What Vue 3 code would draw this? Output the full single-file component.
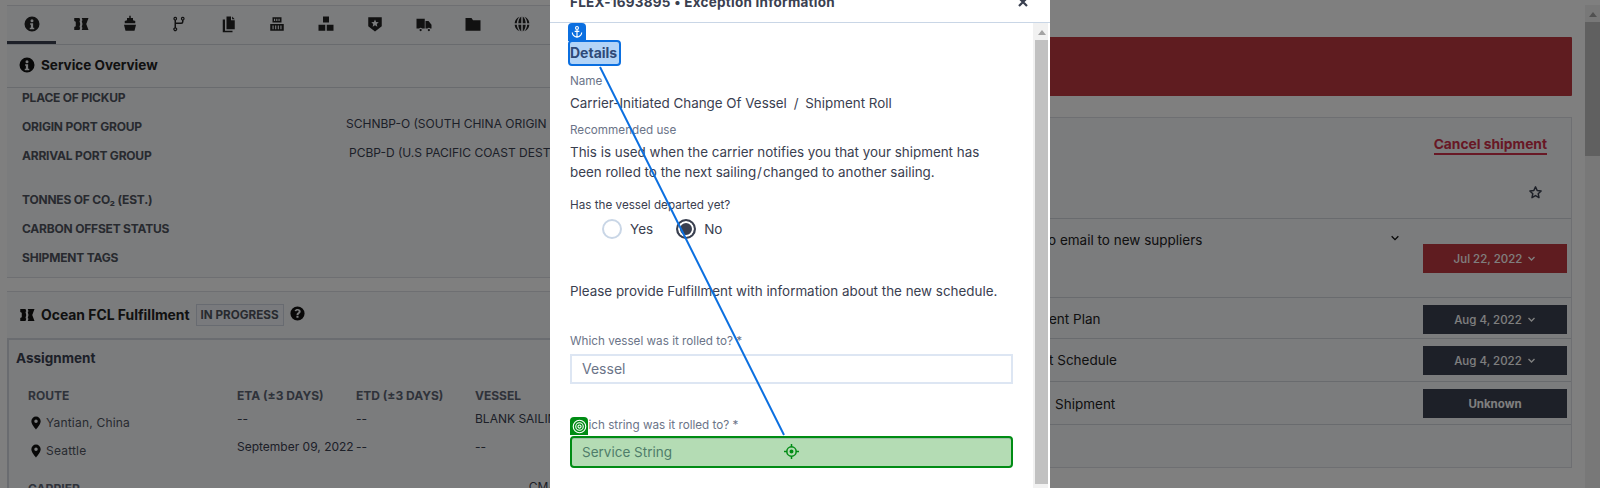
<script setup>
const tabs = [
  'M12 2a10 10 0 1 0 0 20 10 10 0 0 0 0-20zm0 3.600a2 2 0 1 1 0 4 2 2 0 0 1 0-4zM9.500 11h4v6H15v2H9v-2h1.500v-4h-1z',
  'M3 4h7l1 3-1 1 1 4-1 4 1 1-1 3H3v-4l2-1v-6L3 8zM13 4h9l-3 8 3 8h-9l1-3-1-1 1-4-1-4 1-1z',
  'M11 1h2v3h3v3l3 1v3H5V8l3-1V4h3zM4 13h16l-2 8H6z',
  'M7 2.500a2.500 2.500 0 0 1 1 4.800v9.400a2.500 2.500 0 1 1-2 0V7.300a2.500 2.500 0 0 1 1-4.800zm10 0a2.500 2.500 0 0 1 1 4.800V9a3 3 0 0 1-3 3H8v-2h7a1 1 0 0 0 1-1V7.300a2.500 2.500 0 0 1 1-4.800zM7 4a1 1 0 1 0 0 2 1 1 0 0 0 0-2zm10 0a1 1 0 1 0 0 2 1 1 0 0 0 0-2zM7 18a1 1 0 1 0 0 2 1 1 0 0 0 0-2z',
  'M10 2h6v5h5v12H10zM17.500 2l3.500 3.500h-3.500zM5 6h3v15h10v2H5z',
  'M6 3h12v7H6zM3 12h18v9H3zM8 5v3h1.500V5zm3 0v3h1.500V5zm3 0v3h1.500V5zM6 14v5h1.500v-5zm3.500 0v5H11v-5zm3.500 0v5h1.500v-5zm3.500 0v5H18v-5z',
  'M8 2h8v8H8zM2 13h9v8H2zM13 13h9v8h-9z',
  'M3 3h18v12l-9 7-9-7zm9 3-1.500 3.300-3.500.400 2.600 2.400-.700 3.500 3.100-1.800 3.100 1.800-.700-3.500 2.600-2.400-3.500-.400z',
  'M2 5h11v13H9.500a2.500 2.500 0 0 0-4 0H2zM14 8h4l4 5v5h-1.500a2.500 2.500 0 0 0-4 0H14zM7.500 18.500a1.500 1.500 0 1 1 0 3 1.500 1.500 0 0 1 0-3zm11 0a1.500 1.500 0 1 1 0 3 1.500 1.500 0 0 1 0-3z',
  'M2 4h8l2 3h10v14H2z',
  'M11 2v9H7.100c.1-3.700 1.500-7.100 3.900-9zm2 0c2.400 1.900 3.800 5.300 3.900 9H13zM9 2.400C6.600 4.500 5.200 7.600 5.100 11H2.200A10 10 0 0 1 9 2.400zm6 0A10 10 0 0 1 21.800 11h-2.900c-.1-3.400-1.500-6.500-3.900-8.600zM2.200 13h2.900c.1 3.400 1.500 6.500 3.900 8.600A10 10 0 0 1 2.200 13zm4.900 0H11v9c-2.400-1.900-3.800-5.300-3.900-9zm5.900 0h3.900c-.1 3.700-1.500 7.100-3.900 9zm5.900 0h2.900A10 10 0 0 1 15 21.600c2.400-2.100 3.800-5.200 3.900-8.600z'
]

const infoIcon = tabs[0]
const ticketIcon = tabs[1]
const pinIcon = 'M12 1a8 8 0 0 0-8 8c0 5.500 8 14 8 14s8-8.500 8-14a8 8 0 0 0-8-8zm0 5a3 3 0 1 1 0 6 3 3 0 0 1 0-6z'
const helpIcon = 'M12 2a10 10 0 1 0 0 20 10 10 0 0 0 0-20zm.2 3.500c2.600 0 4.300 1.500 4.300 3.600 0 2.900-3.200 3-3.200 4.900h-2.700c0-3.300 3-3.500 3-4.900 0-.7-.6-1.200-1.500-1.200-1 0-1.700.6-2.200 1.400L7.800 7.900c.9-1.500 2.400-2.400 4.400-2.400zM10.500 15.300h2.900v2.800h-2.900z'

const overview = [
  { label: 'PLACE OF PICKUP' },
  { label: 'ORIGIN PORT GROUP', value: 'SCHNBP-O (SOUTH CHINA ORIGIN PORTS)' },
  { label: 'ARRIVAL PORT GROUP', value: 'PCBP-D (U.S PACIFIC COAST DESTINATIONS)', shift: true },
  { label: 'TONNES OF CO₂ (EST.)', gap: true },
  { label: 'CARBON OFFSET STATUS' },
  { label: 'SHIPMENT TAGS' }
]

const routes = [
  { place: 'Yantian, China', eta: '--', etd: '--', vessel: 'BLANK SAILING' },
  { place: 'Seattle', eta: 'September 09, 2022', etd: '--', vessel: '--' }
]

const tasks = [
  { text: 'o email to new suppliers', cls: 'task-first', date: 'Jul 22, 2022', late: true, arrow: true },
  { text: 'ent Plan', cls: 'task-plan', date: 'Aug 4, 2022', arrow: true },
  { text: 't Schedule', cls: 'task-schedule', date: 'Aug 4, 2022', arrow: true },
  { text: 'Shipment', cls: 'task-ship', date: 'Unknown' }
]
</script>

<template>
  <div class="screen">
    <div class="page">
      <div class="left">
        <section class="panel overview">
          <nav class="tabs">
            <span v-for="(d, i) in tabs" :key="i" class="tab" :class="{ active: i === 0 }">
              <svg viewBox="0 0 24 24" width="18" height="18"><path :d="d" fill-rule="evenodd" /></svg>
            </span>
          </nav>
          <h2 class="panel-title">
            <svg viewBox="0 0 24 24" width="18" height="18"><path :d="infoIcon" fill-rule="evenodd" /></svg>
            Service Overview
          </h2>
          <div class="facts">
            <div v-for="row in overview" :key="row.label" class="fact" :class="{ spaced: row.gap }">
              <span class="fact-label">{{ row.label }}</span>
              <span class="fact-value" :class="{ shifted: row.shift }">{{ row.value }}</span>
            </div>
          </div>
        </section>

        <section class="panel fulfillment">
          <h2 class="panel-title second">
            <svg viewBox="0 0 24 24" width="18" height="18"><path :d="ticketIcon" /></svg>
            Ocean FCL Fulfillment
            <span class="status">IN PROGRESS</span>
            <svg class="help" viewBox="0 0 24 24" width="17" height="17"><path :d="helpIcon" fill-rule="evenodd" /></svg>
          </h2>
          <div class="assignment">
            <h3>Assignment</h3>
            <div class="route-grid route-head">
              <span>ROUTE</span>
              <span>ETA (±3 DAYS)</span>
              <span>ETD (±3 DAYS)</span>
              <span>VESSEL</span>
            </div>
            <div v-for="r in routes" :key="r.place" class="route-grid route-row">
              <span class="place">
                <svg viewBox="0 0 24 24" width="14" height="14"><path :d="pinIcon" fill-rule="evenodd" /></svg>
                {{ r.place }}
              </span>
              <span>{{ r.eta }}</span>
              <span>{{ r.etd }}</span>
              <span>{{ r.vessel }}</span>
            </div>
            <div class="carrier">
              <span>CARRIER</span>
              <span class="carrier-name">CMA</span>
            </div>
          </div>
        </section>
      </div>

      <div class="right">
        <div class="alert"></div>
        <section class="panel work">
          <div class="work-head">
            <a class="cancel">Cancel shipment</a>
            <svg class="star" viewBox="0 0 24 24" width="15" height="15"><path d="M12 3l2.700 5.900 6.300.700-4.700 4.300 1.300 6.300L12 17l-5.600 3.200 1.300-6.300L3 9.600l6.300-.700z" fill="none" stroke="#3a4050" stroke-width="2.400" stroke-linejoin="round" /></svg>
          </div>
          <div v-for="t in tasks" :key="t.cls" class="task" :class="t.cls">
            <span class="task-text">{{ t.text }}</span>
            <svg v-if="t.late" class="task-chevron" viewBox="0 0 12 12" width="10" height="10"><path d="M2 4l4 4 4-4" fill="none" stroke="#111" stroke-width="1.600" /></svg>
            <span class="date" :class="{ late: t.late, plain: !t.arrow }">
              {{ t.date }}
              <svg v-if="t.arrow" viewBox="0 0 12 12" width="9" height="9"><path d="M2 4l4 4 4-4" fill="none" stroke="currentColor" stroke-width="1.800" /></svg>
            </span>
          </div>
          <div class="work-foot"></div>
        </section>
      </div>
    </div>

    <div class="page-bar">
      <span class="arrow dim"></span>
      <span class="thumb dim"></span>
    </div>

    <div class="overlay"></div>

    <div class="modal">
      <header class="modal-head">
        <span>FLEX-1693895 • Exception Information</span>
        <svg viewBox="0 0 12 12" width="12" height="12"><path d="M2 2l8 8M10 2l-8 8" stroke="#3a4050" stroke-width="2.200" /></svg>
      </header>
      <div class="modal-scroll">
        <div class="modal-body">
          <div class="details">
            <span class="tag anchor-tag">
              <svg viewBox="0 0 24 24" width="14" height="14" fill="none" stroke="#fff" stroke-width="2">
                <circle cx="12" cy="5" r="2.500" />
                <path d="M12 8v13M8 11h8M4 13c0 4 4 7 8 8 4-1 8-4 8-8" />
              </svg>
            </span>
            Details
          </div>
          <div class="small name-label">Name</div>
          <div class="text name-value">Carrier-Initiated Change Of Vessel <span class="slash">/</span> Shipment Roll</div>
          <div class="small rec-label">Recommended use</div>
          <p class="text rec-text">This is used when the carrier notifies you that your shipment has been rolled to the next sailing<span class="slash-tight">/</span>changed to another sailing.</p>
          <div class="small departed">Has the vessel departed yet?</div>
          <div class="radios">
            <label class="radio"><span class="dot"></span>Yes</label>
            <label class="radio on"><span class="dot"></span>No</label>
          </div>
          <p class="text provide">Please provide Fulfillment with information about the new schedule.</p>
          <div class="small vessel-label">Which vessel was it rolled to? *</div>
          <div class="input">Vessel</div>
          <div class="small string-label">
            <span class="tag target-tag">
              <svg viewBox="0 0 24 24" width="15" height="15" fill="none" stroke="#fff" stroke-width="1.800">
                <circle cx="12" cy="12" r="10" />
                <circle cx="12" cy="12" r="6" />
                <circle cx="12" cy="12" r="2.500" />
              </svg>
            </span>
            Which string was it rolled to? *
          </div>
          <div class="input target">
            Service String
            <svg class="crosshair" viewBox="0 0 24 24" width="15" height="15" fill="none" stroke="#008c14" stroke-width="2.400">
              <circle cx="12" cy="12" r="7.500" />
              <circle cx="12" cy="12" r="2" fill="#008c14" />
              <path d="M12 0v5M12 19v5M0 12h5M19 12h5" />
            </svg>
          </div>
        </div>
        <div class="modal-bar">
          <span class="arrow"></span>
          <span class="thumb"></span>
        </div>
      </div>
    </div>

    <svg class="link" width="1600" height="488">
      <line x1="600" y1="67" x2="784" y2="435" stroke="#0b6fe0" stroke-width="2" />
    </svg>
  </div>
</template>

<style>
html, body {
  margin: 0;
  background: #fff;
}
</style>

<style scoped>
.screen {
  position: relative;
  display: flex;
  width: 1600px;
  height: 488px;
  overflow: hidden;
  background: #fff;
  font-family: "Inter", "Liberation Sans", sans-serif;
  color: #3a4050;
}

.page {
  flex: 1;
  display: flex;
  gap: 12px;
  padding: 5px 13px 0 7px;
  min-width: 0;
}

.left {
  width: 760px;
  flex: none;
}

.right {
  flex: 1;
  min-width: 0;
  padding-top: 32px;
}

.panel {
  background: #f6f8fb;
  border: 1px solid #dcdfe4;
  box-sizing: border-box;
}

.overview {
  height: 273px;
  border-left-width: 0;
}

.tabs {
  display: flex;
  height: 38px;
  border-bottom: 1px solid #d3d6dc;
}

.tab {
  width: 49px;
  display: flex;
  align-items: center;
  justify-content: center;
  box-sizing: border-box;
  padding-bottom: 2px;
}

.tab svg {
  fill: #222;
}

.tab.active {
  border-bottom: 3px solid #3a4050;
  height: 38px;
  padding-bottom: 0;
}

.panel-title {
  margin: 0;
  display: flex;
  align-items: center;
  gap: 5px;
  padding: 0 0 2px 11px;
  height: 40px;
  border-bottom: 1px solid #d3d6dc;
  font-size: 13.500px;
  font-weight: 700;
  color: #222;
  white-space: nowrap;
}

.panel-title svg {
  fill: #111;
}

.facts {
  padding: 2px 0 0 15px;
}

.fact {
  display: flex;
  height: 16px;
  margin-bottom: 13px;
  line-height: 16px;
  font-size: 12px;
}

.fact.spaced {
  margin-top: 28px;
}

.fact-label {
  width: 324px;
  flex: none;
  font-weight: 700;
  color: #50555f;
  letter-spacing: -0.2px;
}

.fact-value {
  margin-top: -3px;
  color: #3a4050;
  white-space: nowrap;
}

.fact-value.shifted {
  margin-left: 3px;
}

.fulfillment {
  margin-top: 13px;
  height: 240px;
  border-left-width: 0;
}

.second {
  height: 46px;
  padding-bottom: 0;
  border-bottom: 0;
  font-size: 13.900px;
}

.status {
  margin-left: 1px;
  padding: 0 4px;
  height: 20px;
  line-height: 20px;
  border: 1px solid #d0d7e2;
  background: #f2f5fa;
  font-size: 11.700px;
  color: #50555f;
}

.help {
  margin: -4px 0 0 0;
}

.assignment {
  border-top: 2px solid #d5d9e0;
  border-left: 2px solid #d5d9e0;
  padding: 0 0 0 7px;
}

.assignment h3 {
  margin: 0;
  padding-top: 9px;
  font-size: 13.500px;
  line-height: 18px;
  font-weight: 700;
  color: #3a4050;
}

.route-grid {
  display: grid;
  grid-template-columns: 209px 119px 119px 1fr;
  padding-left: 12px;
  font-size: 12px;
  white-space: nowrap;
}

.route-head {
  margin-top: 21px;
  line-height: 16px;
  font-weight: 700;
  color: #5f6675;
}

.route-row {
  margin-top: 7px;
  line-height: 21px;
  height: 21px;
}

.route-row span:not(.place) {
  margin-top: -3px;
}

.place {
  display: flex;
  align-items: center;
  gap: 3px;
  margin-top: 1px;
  padding-left: 1px;
  color: #50555f;
  letter-spacing: 0.2px;
}

.place svg {
  fill: #111;
}

.carrier {
  display: flex;
  margin-top: 21px;
  padding-left: 12px;
  font-size: 12px;
  line-height: 16px;
  font-weight: 700;
  color: #5f6675;
}

.carrier-name {
  margin-left: 449px;
  margin-top: -2px;
  font-weight: 400;
  color: #3a4050;
}

.alert {
  height: 59px;
  border-radius: 1px;
  background: #be3840;
  margin-bottom: 21px;
}

.work {
  background: #f6f8fb;
  height: 351px;
}

.work-head {
  height: 100px;
  border-bottom: 1px solid #d3d6dc;
  position: relative;
}

.cancel {
  position: absolute;
  right: 24px;
  top: 17px;
  font-size: 13.800px;
  line-height: 18px;
  font-weight: 700;
  color: #d0304a;
  border-bottom: 2px solid #d0304a;
  white-space: nowrap;
}

.star {
  position: absolute;
  right: 28px;
  top: 67px;
}

.task {
  position: relative;
  display: flex;
  box-sizing: border-box;
  border-bottom: 1px solid #d3d6dc;
  font-size: 13.500px;
  color: #222;
  white-space: nowrap;
  justify-content: flex-end;
}

.task-text {
  position: absolute;
  line-height: 18px;
}

.task-first { height: 79px; padding: 25px 4px 0 0; }
.task-plan { height: 41px; padding: 7px 4px 0 0; }
.task-schedule { height: 43px; padding: 7px 4px 0 0; }
.task-ship { height: 43px; padding: 7px 4px 0 0; }

.task-first .task-text { left: 268px; top: 12px; }
.task-plan .task-text { left: 269px; top: 12px; }
.task-schedule .task-text { left: 269px; top: 12px; }
.task-ship .task-text { left: 275px; top: 13px; }

.task-chevron {
  position: absolute;
  left: 610px;
  top: 14px;
}

.date {
  display: flex;
  align-items: center;
  justify-content: center;
  gap: 5px;
  width: 144px;
  height: 29px;
  background: #3a4050;
  color: #fff;
  font-size: 11.500px;
  font-weight: 500;
}

.date.plain {
  font-weight: 700;
}

.date.late {
  background: #be3840;
}

.work-foot {
  height: 42px;
}

.page-bar {
  width: 15px;
  flex: none;
  background: #f1f1f1;
  margin-top: 5px;
}

.page-bar .arrow,
.modal-bar .arrow {
  display: block;
  width: 0;
  margin: 7px auto 5px;
  border: 4px solid transparent;
  border-top: 0;
  border-bottom: 5px solid #a3a3a3;
}

.page-bar .thumb {
  display: block;
  height: 134px;
  background: #c1c1c1;
}

.overlay {
  position: absolute;
  inset: 0;
  background: rgba(0, 0, 0, 0.5);
}

.modal {
  position: absolute;
  left: 550px;
  top: -18px;
  width: 500px;
  height: 506px;
  background: #fff;
  display: flex;
  flex-direction: column;
}

.modal-head {
  flex: none;
  height: 41px;
  box-sizing: border-box;
  border-bottom: 1px solid #c9d6e6;
  display: flex;
  justify-content: space-between;
  align-items: center;
  padding: 0 21px 1px 20px;
  font-size: 13.500px;
  font-weight: 700;
  letter-spacing: 0.25px;
  color: #3a4050;
}

.modal-scroll {
  flex: 1;
  display: flex;
  min-height: 0;
}

.modal-body {
  flex: 1;
  padding: 17px 20px 0;
  min-width: 0;
}

.modal-bar {
  flex: none;
  width: 17px;
  background: #f1f1f1;
  padding-left: 2px;
  border-right: 2px solid #fff;
  box-sizing: border-box;
}

.modal-bar .thumb {
  display: block;
  height: 444px;
  background: #c1c1c1;
}

.small {
  font-size: 11.700px;
  line-height: 16px;
  color: #6b7488;
}

.text {
  margin: 0;
  font-size: 13.400px;
  line-height: 20px;
  color: #3a4050;
}

.slash {
  margin: 0 3px;
}

.slash-tight {
  margin: 0 1px;
}

.details {
  position: relative;
  width: 53px;
  height: 26px;
  margin-left: -2px;
  box-sizing: border-box;
  border: 2px solid #0b6fe0;
  border-radius: 4px;
  background: #b3d4f7;
  font-size: 14px;
  font-weight: 700;
  line-height: 22px;
  color: #2f4a78;
}

.tag {
  position: absolute;
  display: flex;
  align-items: center;
  justify-content: center;
  width: 18px;
  height: 18px;
}

.anchor-tag {
  left: -2px;
  top: -19px;
  background: #0b6fe0;
  border-radius: 4px 4px 0 0;
}

.name-label { margin-top: 7px; }
.name-value { margin-top: 4px; }
.rec-label { margin-top: 9px; }
.rec-text { margin-top: 4px; }
.departed { margin-top: 15px; color: #3a4050; }

.radios {
  display: flex;
  gap: 23px;
  height: 20px;
  margin: 6px 0 0 32px;
}

.radio {
  display: flex;
  align-items: center;
  gap: 8px;
  font-size: 13.500px;
  color: #3a4050;
}

.dot {
  width: 20px;
  height: 20px;
  box-sizing: border-box;
  border: 2px solid #c9d6e6;
  border-radius: 50%;
}

.radio.on .dot {
  border-color: #3a4050;
  background: #3a4050;
  box-shadow: inset 0 0 0 2px #fff;
}

.provide { margin-top: 42px; }
.vessel-label { margin-top: 32px; }

.input {
  position: relative;
  height: 30px;
  margin-top: 5px;
  box-sizing: border-box;
  border: 2px solid #dde6f3;
  padding-left: 10px;
  font-size: 14px;
  line-height: 26px;
  color: #6b7488;
}

.string-label {
  position: relative;
  margin-top: 33px;
}

.target-tag {
  left: 0;
  top: 0;
  background: #008c14;
  border-radius: 4px 4px 0 0;
}

.input.target {
  margin-top: 3px;
  height: 32px;
  border: 2px solid #008c14;
  border-radius: 4px;
  background: #b4dcb4;
  box-shadow: inset 0 1px 0 #9cbfa5;
  font-size: 13.500px;
  line-height: 28px;
  color: #4f7d6a;
}

.crosshair {
  position: absolute;
  left: 212px;
  top: 6px;
}

.link {
  position: absolute;
  left: 0;
  top: 0;
  pointer-events: none;
}
</style>
